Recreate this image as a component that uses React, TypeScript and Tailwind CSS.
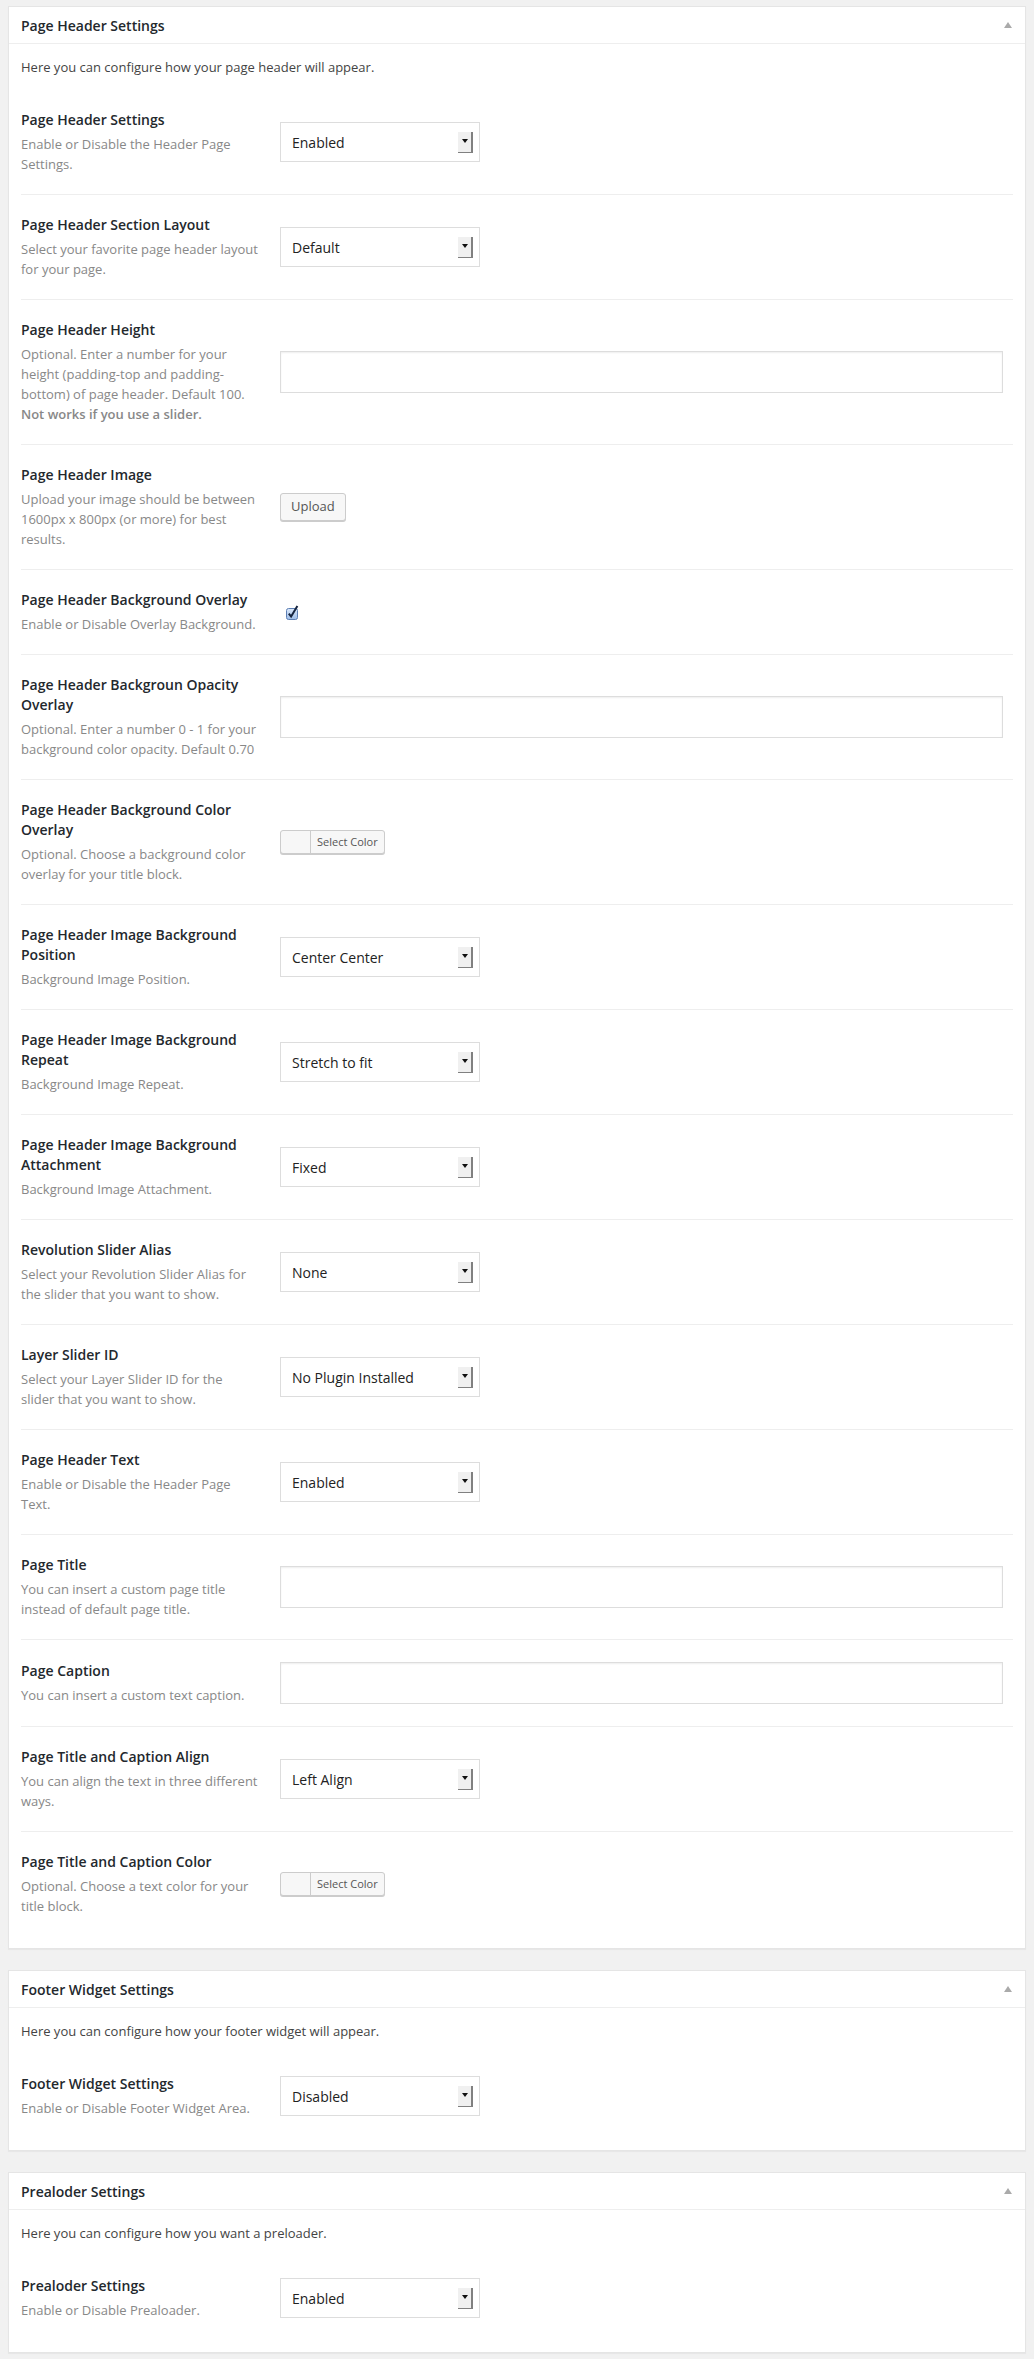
import React from 'react';

type Control =
	| { kind: 'select'; value: string }
	| { kind: 'text' }
	| { kind: 'upload' }
	| { kind: 'checkbox' }
	| { kind: 'color' };

type Field = {
	label: string;
	desc: React.ReactNode;
	control: Control;
};

type Panel = {
	title: string;
	intro: string;
	fields: Field[];
};

const panels: Panel[] = [
	{
		title: 'Page Header Settings',
		intro: 'Here you can configure how your page header will appear.',
		fields: [
			{
				label: 'Page Header Settings',
				desc: 'Enable or Disable the Header Page Settings.',
				control: { kind: 'select', value: 'Enabled' },
			},
			{
				label: 'Page Header Section Layout',
				desc: 'Select your favorite page header layout for your page.',
				control: { kind: 'select', value: 'Default' },
			},
			{
				label: 'Page Header Height',
				desc: (
					<>
						Optional. Enter a number for your height (padding-top and padding-bottom) of page header. Default 100.{' '}
						<strong className="font-semibold">Not works if you use a slider.</strong>
					</>
				),
				control: { kind: 'text' },
			},
			{
				label: 'Page Header Image',
				desc: 'Upload your image should be between 1600px x 800px (or more) for best results.',
				control: { kind: 'upload' },
			},
			{
				label: 'Page Header Background Overlay',
				desc: 'Enable or Disable Overlay Background.',
				control: { kind: 'checkbox' },
			},
			{
				label: 'Page Header Backgroun Opacity Overlay',
				desc: 'Optional. Enter a number 0 - 1 for your background color opacity. Default 0.70',
				control: { kind: 'text' },
			},
			{
				label: 'Page Header Background Color Overlay',
				desc: 'Optional. Choose a background color overlay for your title block.',
				control: { kind: 'color' },
			},
			{
				label: 'Page Header Image Background Position',
				desc: 'Background Image Position.',
				control: { kind: 'select', value: 'Center Center' },
			},
			{
				label: 'Page Header Image Background Repeat',
				desc: 'Background Image Repeat.',
				control: { kind: 'select', value: 'Stretch to fit' },
			},
			{
				label: 'Page Header Image Background Attachment',
				desc: 'Background Image Attachment.',
				control: { kind: 'select', value: 'Fixed' },
			},
			{
				label: 'Revolution Slider Alias',
				desc: 'Select your Revolution Slider Alias for the slider that you want to show.',
				control: { kind: 'select', value: 'None' },
			},
			{
				label: 'Layer Slider ID',
				desc: (
					<>
						Select your Layer Slider ID for the
						<br />
						slider that you want to show.
					</>
				),
				control: { kind: 'select', value: 'No Plugin Installed' },
			},
			{
				label: 'Page Header Text',
				desc: 'Enable or Disable the Header Page Text.',
				control: { kind: 'select', value: 'Enabled' },
			},
			{
				label: 'Page Title',
				desc: 'You can insert a custom page title instead of default page title.',
				control: { kind: 'text' },
			},
			{
				label: 'Page Caption',
				desc: 'You can insert a custom text caption.',
				control: { kind: 'text' },
			},
			{
				label: 'Page Title and Caption Align',
				desc: 'You can align the text in three different ways.',
				control: { kind: 'select', value: 'Left Align' },
			},
			{
				label: 'Page Title and Caption Color',
				desc: 'Optional. Choose a text color for your title block.',
				control: { kind: 'color' },
			},
		],
	},
	{
		title: 'Footer Widget Settings',
		intro: 'Here you can configure how your footer widget will appear.',
		fields: [
			{
				label: 'Footer Widget Settings',
				desc: 'Enable or Disable Footer Widget Area.',
				control: { kind: 'select', value: 'Disabled' },
			},
		],
	},
	{
		title: 'Prealoder Settings',
		intro: 'Here you can configure how you want a preloader.',
		fields: [
			{
				label: 'Prealoder Settings',
				desc: 'Enable or Disable Prealoader.',
				control: { kind: 'select', value: 'Enabled' },
			},
		],
	},
];

function SelectBox({ value }: { value: string }) {
	return (
		<div className="flex h-[40px] w-[200px] items-center justify-between border border-[#ddd] bg-white pl-[11px] pr-[6px]">
			<span className="text-[14px] text-[#222]">{value}</span>
			{/* old mac style arrow button */}
			<span className="flex h-[21px] w-[15px] justify-center border-r-[2px] border-b-[1px] border-[#808080] bg-[#f0f0f0] pt-[7px]">
				<svg width="6" height="4" viewBox="0 0 6 4">
					<path d="M0 0h6L3 4z" fill="#111" />
				</svg>
			</span>
		</div>
	);
}

function FieldControl({ control }: { control: Control }) {
	switch (control.kind) {
		case 'select':
			return <SelectBox value={control.value} />;
		case 'text':
			return (
				<div className="my-[2px] h-[42px] w-full border border-[#ddd] bg-white shadow-[inset_0_1px_2px_rgba(0,0,0,0.07)]" />
			);
		case 'upload':
			return (
				<button className="h-[28px] rounded-[3px] border border-[#ccc] bg-[#f7f7f7] px-[10px] text-[13px] text-[#555] shadow-[0_1px_0_#ccc]">
					Upload
				</button>
			);
		case 'checkbox':
			return (
				<span className="ml-[6px] block">
					<svg width="13" height="15" viewBox="0 0 13 15">
						<defs>
							<linearGradient id="cbg" x1="0" y1="0" x2="0" y2="1">
								<stop offset="0" stopColor="#dce9fb" />
								<stop offset="1" stopColor="#9dbde8" />
							</linearGradient>
						</defs>
						<rect x="0.5" y="3.5" width="11" height="11" rx="2" fill="url(#cbg)" stroke="#5d7fb4" />
						<path d="M2.8 8.6l2.3 2.9L11.4 1" fill="none" stroke="#15243f" strokeWidth="2" />
					</svg>
				</span>
			);
		case 'color':
			return (
				<div className="flex h-[24px] w-[105px] overflow-hidden rounded-[3px] border border-[#ccc] bg-[#f7f7f7] shadow-[0_1px_0_#ccc]">
					<span className="w-[30px] border-r border-[#ccc]" />
					<span className="flex items-center pl-[6px] text-[11px] text-[#555]">Select Color</span>
				</div>
			);
	}
}

function SettingsPanel({ panel }: { panel: Panel }) {
	return (
		<div className="border border-[#e5e5e5] bg-white shadow-[0_1px_1px_rgba(0,0,0,0.04)]">
			{/* header */}
			<div className="flex h-[37px] items-center justify-between border-b border-[#eee] pl-[12px] pr-[13px]">
				<h3 className="text-[14px] font-semibold text-[#23282d]">{panel.title}</h3>
				<svg width="8" height="6" viewBox="0 0 8 6">
					<path d="M4 0l4 6H0z" fill="#aaa" />
				</svg>
			</div>

			<div className="px-[12px] pt-[13px] pb-[12px]">
				<p className="mb-[13px] text-[13px] leading-[20px] text-[#444]">{panel.intro}</p>

				{panel.fields.map((field, idx) => (
					<div
						key={idx}
						className={`flex items-center py-[20px] ${idx < panel.fields.length - 1 ? 'border-b border-[#eee]' : ''}`}
					>
						<div className="w-[259px] shrink-0 pr-[19px]">
							<div className="text-[14px] font-semibold leading-[20px] text-[#23282d]">{field.label}</div>
							<div className="mt-[4px] text-[13px] leading-[20px] text-[#888]">{field.desc}</div>
						</div>
						<div className="flex flex-1 items-center pr-[10px]">
							<FieldControl control={field.control} />
						</div>
					</div>
				))}
			</div>
		</div>
	);
}

export default function App() {
	return (
		<div
			className="min-h-screen bg-[#f1f1f1] px-[8px] pt-[6px] pb-[8px]"
			style={{ fontFamily: '"Open Sans", "Liberation Sans", sans-serif' }}
		>
			<div className="space-y-[21px]">
				{panels.map((panel, idx) => (
					<SettingsPanel key={idx} panel={panel} />
				))}
			</div>
		</div>
	);
}
